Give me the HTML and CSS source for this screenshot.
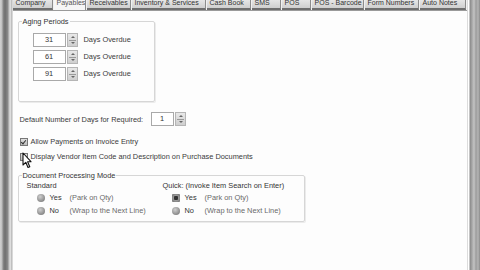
FILE: index.html
```html
<!DOCTYPE html>
<html lang="en">
<head>
    <meta charset="UTF-8">
    <title>Options - Payables</title>
    <link rel="stylesheet" href="styles.css">
</head>
<body>
    <div class="frame-left"></div>
    <div id="window">
        <div class="tabs">
            <span class="tab" style="width:40px">Company</span>
            <span class="tab active" style="width:32px">Payables</span>
            <span class="tab" style="width:44px">Receivables</span>
            <span class="tab" style="width:74px">Inventory &amp; Services</span>
            <span class="tab" style="width:44px">Cash Book</span>
            <span class="tab" style="width:29px">SMS</span>
            <span class="tab" style="width:29px">POS</span>
            <span class="tab" style="width:52px">POS - Barcode</span>
            <span class="tab" style="width:54px">Form Numbers</span>
            <span class="tab" style="width:46px">Auto Notes</span>
        </div>
        <div class="page">
            <fieldset class="group aging">
                <legend>Aging Periods</legend>
                <div class="aging-row">
                    <span class="spin"><span class="spin-box">31</span><span class="spin-btn"></span></span>
                    <span>Days Overdue</span>
                </div>
                <div class="aging-row">
                    <span class="spin"><span class="spin-box">61</span><span class="spin-btn"></span></span>
                    <span>Days Overdue</span>
                </div>
                <div class="aging-row">
                    <span class="spin"><span class="spin-box">91</span><span class="spin-btn"></span></span>
                    <span>Days Overdue</span>
                </div>
            </fieldset>

            <div class="form-row required">
                <span class="req-label">Default Number of Days for Required:</span>
                <span class="spin small"><span class="spin-box">1</span><span class="spin-btn"></span></span>
            </div>

            <div class="check-row first">
                <span class="check checked"></span>
                <span>Allow Payments on Invoice Entry</span>
            </div>
            <div class="check-row">
                <span class="check"></span>
                <span>Display Vendor Item Code and Description on Purchase Documents</span>
                <svg class="cursor" width="10" height="17" viewBox="0 0 10 17">
                    <path d="M1 1 L1 13 L3.8 10.3 L6 15.5 L7.8 14.7 L5.6 9.7 L9 9.7 Z" fill="#fff" stroke="#111" stroke-width="1.1" stroke-linejoin="round"/>
                </svg>
            </div>

            <fieldset class="group mode">
                <legend>Document Processing Mode</legend>
                <div class="mode-cols">
                    <div class="mode-col std">
                        <div class="mode-title">Standard</div>
                        <div class="radio-row"><span class="radio"></span><span class="opt">Yes</span><span class="hint">(Park on Qty)</span></div>
                        <div class="radio-row"><span class="radio"></span><span class="opt">No</span><span class="hint">(Wrap to the Next Line)</span></div>
                    </div>
                    <div class="mode-col quick">
                        <div class="mode-title">Quick: (Invoke Item Search on Enter)</div>
                        <div class="radio-row"><span class="radio on"></span><span class="opt">Yes</span><span class="hint">(Park on Qty)</span></div>
                        <div class="radio-row"><span class="radio"></span><span class="opt">No</span><span class="hint">(Wrap to the Next Line)</span></div>
                    </div>
                </div>
            </fieldset>
        </div>
    </div>
    <div class="frame-right"></div>
</body>
</html>
```
FILE: styles.css
```css
html, body {
    margin: 0;
    padding: 0;
    width: 480px;
    height: 270px;
    overflow: hidden;
}
body {
    display: flex;
    font-family: "Liberation Sans", Arial, sans-serif;
    font-size: 7.4px;
    color: #3a3a3a;
    background: #fcfcfc;
}
.frame-left {
    width: 12px;
    background: linear-gradient(to right, #d2d2d2 0, #bdbdbd 2px, #8a8a8a 3px, #6e6e6e 5px, #8c8c8c 8px, #c8c8c8 9px, #e4e4e4 11px, #9a9a9a 12px);
}
.frame-right {
    width: 14px;
    background: linear-gradient(to right, #b8b8b8 0, #ffffff 1px, #ffffff 2px, #8a8a8a 3px, #a6a6a6 5px, #c4c4c4 7px, #9c9c9c 9px, #b4b4b4 11px, #8a8a8a 13px);
}
#window {
    flex: 1;
    display: flex;
    flex-direction: column;
    border-left: 1px solid #d8d8d8;
    background: #fdfdfd;
}
.tabs {
    display: flex;
    height: 10px;
    background: #f0f0f0;
    border-bottom: 1px solid #9a9a9a;
}
.tab {
    box-sizing: border-box;
    height: 10px;
    line-height: 6px;
    padding-left: 3px;
    margin-right: 1px;
    white-space: nowrap;
    overflow: hidden;
    font-size: 7px;
    color: #333;
    background: linear-gradient(#e6e6e6, #cfcfcf);
    border-right: 1px solid #8c8c8c;
    border-bottom: 2px solid #6f6f6f;
}
.tab.active {
    background: #f6f6f6;
    border-bottom: 0;
    color: #555;
}
.page {
    padding: 7px 0 0 5px;
}
fieldset.group {
    margin: 0;
    padding: 0;
    border: 1px solid #d6d6d6;
    border-radius: 2px;
    box-shadow: 1px 1px 0 #ebebeb;
}
fieldset.group legend {
    padding: 0 1px;
    margin-left: 3px;
    line-height: 7px;
    color: #333;
}
.aging {
    width: 137px;
    height: 84px;
    box-sizing: border-box;
    padding-top: 6px !important;
}
.aging-row {
    display: flex;
    align-items: center;
    height: 17px;
    padding-left: 14px;
    gap: 6px;
}
.spin {
    display: flex;
    align-items: center;
    gap: 1px;
}
.spin-box {
    box-sizing: border-box;
    width: 33px;
    height: 14px;
    border: 1px solid #a9a9a9;
    background: #fff;
    text-align: center;
    line-height: 12px;
    color: #333;
}
.spin.small .spin-box {
    width: 23px;
}
.spin-btn {
    box-sizing: border-box;
    width: 11px;
    height: 14px;
    border: 1px solid #b5b5b5;
    background:
        linear-gradient(#9a9a9a, #9a9a9a) center 6px / 7px 1px no-repeat,
        linear-gradient(#e8e8e8, #cfcfcf);
    position: relative;
}
.spin-btn::before,
.spin-btn::after {
    content: "";
    position: absolute;
    left: 3px;
    border-left: 2px solid transparent;
    border-right: 2px solid transparent;
}
.spin-btn::before {
    top: 2px;
    border-bottom: 2px solid #666;
}
.spin-btn::after {
    bottom: 2px;
    border-top: 2px solid #666;
}
.form-row.required {
    display: flex;
    align-items: center;
    height: 14px;
    margin-top: 10px;
    padding-left: 2px;
}
.req-label {
    width: 131px;
}
.check-row {
    display: flex;
    align-items: center;
    height: 15px;
    padding-left: 2px;
    gap: 3px;
    position: relative;
}
.check-row.first {
    margin-top: 8px;
}
.check {
    box-sizing: border-box;
    width: 8px;
    height: 8px;
    border: 1px solid #777;
    background: linear-gradient(#e0e0e0, #bcbcbc);
    position: relative;
}
.check.checked::after {
    content: "";
    position: absolute;
    left: 1px;
    top: 0;
    width: 2px;
    height: 4px;
    border-right: 1px solid #333;
    border-bottom: 1px solid #333;
    transform: rotate(40deg);
}
.cursor {
    position: absolute;
    left: 4px;
    top: 3px;
}
.mode {
    width: 287px;
    height: 50px;
    box-sizing: border-box;
    margin-top: 8px !important;
}
.mode-cols {
    display: flex;
    padding-top: 2px;
}
.mode-col.std {
    width: 136px;
    padding-left: 8px;
}
.mode-title {
    height: 10px;
    line-height: 10px;
    color: #333;
}
.radio-row {
    display: flex;
    align-items: center;
    height: 13px;
    padding-left: 10px;
}
.quick .radio-row {
    padding-left: 9px;
}
.radio {
    box-sizing: border-box;
    width: 8px;
    height: 8px;
    border-radius: 50%;
    background: radial-gradient(circle at 40% 35%, #cfcfcf 0, #8a8a8a 70%, #6d6d6d 100%);
    margin-right: 5px;
}
.radio.on {
    border-radius: 1px;
    background: radial-gradient(circle, #333 0, #333 35%, #9a9a9a 45%, #6d6d6d 100%);
}
.opt {
    width: 20px;
    color: #333;
}
.hint {
    color: #6a6a6a;
}
```
